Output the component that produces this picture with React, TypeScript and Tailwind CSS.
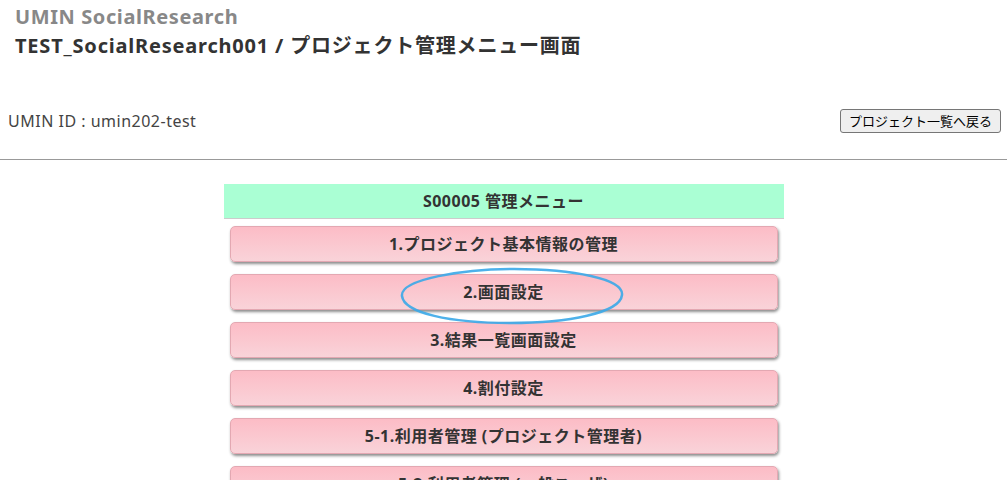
const menu = [
  '1.プロジェクト基本情報の管理',
  '2.画面設定',
  '3.結果一覧画面設定',
  '4.割付設定',
  '5-1.利用者管理 (プロジェクト管理者)',
  '5-2.利用者管理 (一般ユーザ)',
];

export default function App() {
  return (
    <div className="relative h-[480px] overflow-hidden bg-white text-[#333] font-['Noto_Sans','Noto_Sans_CJK_JP',sans-serif]">
      <div className="px-[15px] pt-[4px]">
        <div className="text-[20px] font-bold leading-[26px] tracking-[0.6px] text-[#888]">UMIN SocialResearch</div>
        <div className="mt-[3px] text-[20px] font-bold leading-[26px] tracking-[0.8px] text-[#333]">
          TEST_SocialResearch001 / プロジェクト管理メニュー画面
        </div>
      </div>
      <div className="mt-[50px] flex items-center justify-between pl-[8px] pr-[6px]">
        <span className="text-[16px] tracking-[0.5px] text-[#444]">UMIN ID : umin202-test</span>
        <button className="h-[24px] rounded-[3px] border border-[#767676] bg-[#efefef] px-[8px] text-[13px] leading-none text-black">
          プロジェクト一覧へ戻る
        </button>
      </div>
      <hr className="mt-[26px] border-t border-[#999]" />
      <div className="mx-auto mt-[24px] w-[560px]">
        <div className="flex h-[35px] items-center justify-center border-b border-[#ccc] bg-[#aaffd4] text-[16px] font-bold tracking-[0.5px] text-[#333]">
          S00005 管理メニュー
        </div>
        <div className="flex flex-col gap-[12px] px-[6px] pt-[7px]">
          {menu.map((m) => (
            <div
              key={m}
              className="flex h-[36px] items-center justify-center rounded-[5px] border border-[#e3a8b2] bg-gradient-to-b from-[#fcbcc6] to-[#f9d3d9] text-[16px] font-bold tracking-[0.5px] text-[#333] shadow-[1px_2px_3px_rgba(0,0,0,0.45)]"
            >
              {m}
            </div>
          ))}
        </div>
      </div>
      <svg className="absolute left-[398px] top-[265px]" width="230" height="62" viewBox="0 0 230 62">
        <path
          d="M4 31 C 2 14, 66 4, 116 4 C 175 4, 226 14, 224 30 C 222 48, 170 58, 112 58 C 52 58, 6 48, 4 31 Z"
          fill="none"
          stroke="#3aa8e8"
          strokeWidth="2.5"
          opacity="0.9"
        />
      </svg>
    </div>
  );
}
